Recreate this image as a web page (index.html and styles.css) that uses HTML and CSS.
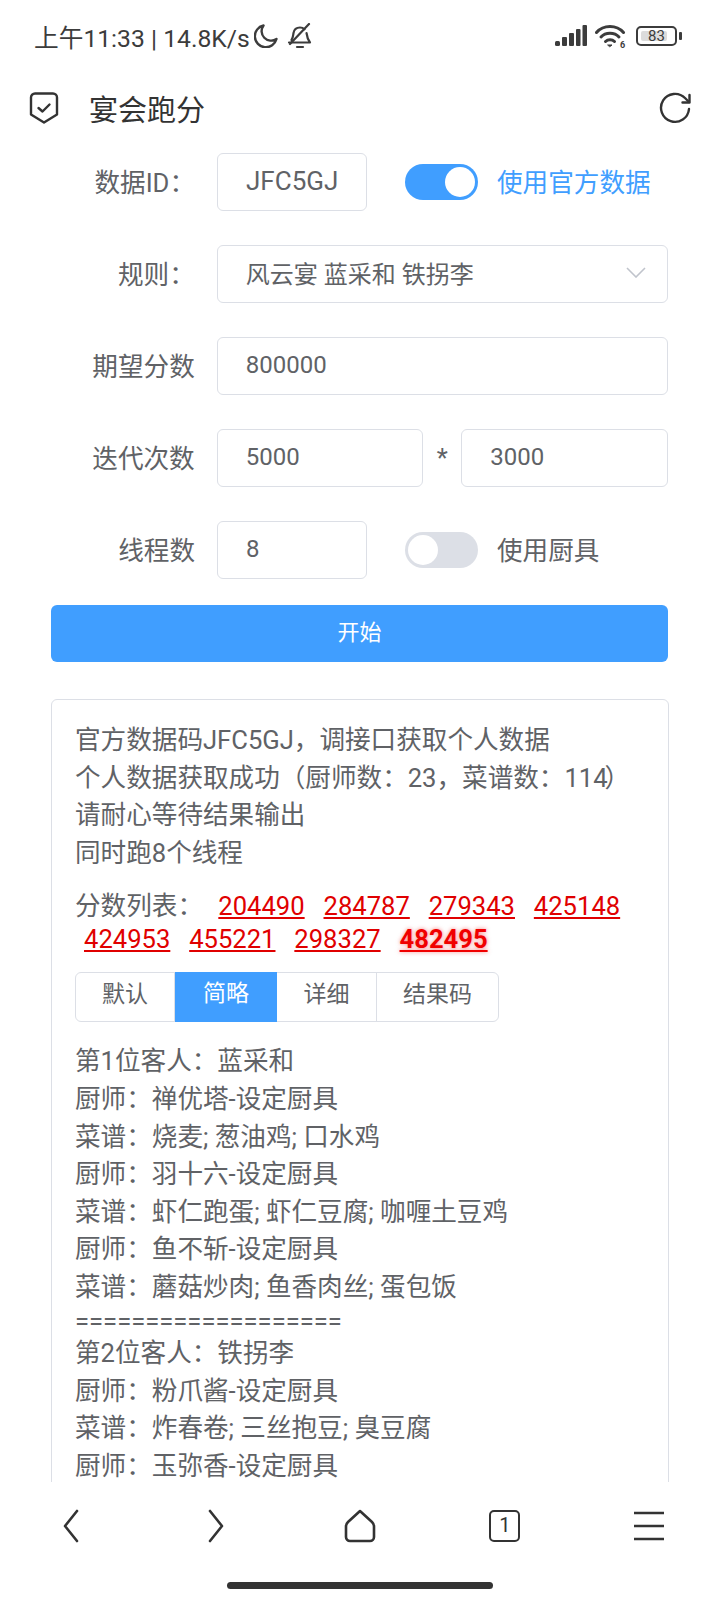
FILE: index.html
```html
<!DOCTYPE html>
<html lang="zh-CN">
<head>
  <meta charset="UTF-8">
  <title>宴会跑分</title>
  <link rel="stylesheet" href="styles.css">
</head>
<body>
  <div class="status-bar">
    <div class="status-left">
      <span class="status-text">上午11:33 | 14.8K/s</span>
      <svg class="moon" width="24" height="24" viewBox="0 0 24 24"><path d="M9.500 1.500a11 11 0 1 0 13 13.500 9.500 9.500 0 0 1-13-13.500z" fill="none" stroke="#3c3c3c" stroke-width="2.400" stroke-linejoin="round"/></svg>
      <svg class="bell" width="26" height="26" viewBox="0 0 26 26" fill="none" stroke="#3c3c3c" stroke-width="2.200" stroke-linecap="round" stroke-linejoin="round"><path d="M4.500 17c1.500-2 1.500-4 2-7 .6-3.500 3.200-5.500 6.500-5.500 1.800 0 3.300.6 4.500 1.800M19.500 10c.4 3 .8 6 3.500 9.500H2"/><path d="M22 1 3 21"/><path d="M10 24h6"/></svg>
    </div>
    <div class="status-right">
      <svg width="32" height="22" viewBox="0 0 32 22" fill="#3c3c3c"><rect x="0" y="16" width="5" height="5" rx="1.500"/><rect x="7" y="12" width="5" height="9" rx="1"/><rect x="14" y="8" width="5" height="13" rx="1"/><rect x="21" y="4" width="4.500" height="17" rx="1"/><rect x="27.500" y="0" width="4.500" height="21" rx="1"/></svg>
      <svg width="32" height="24" viewBox="0 0 32 24" fill="none" stroke="#3c3c3c" stroke-width="3" stroke-linecap="round"><path d="M1.500 8.500c7-8 20-8 27 0"/><path d="M6 13c4.500-5 13.500-5 18 0"/><path d="M10.500 17.500c2.500-2.500 6.500-2.500 9 0"/><path d="M13 21h4l-2 1.500z" fill="#3c3c3c" stroke-width="1"/><text x="25" y="23.500" class="wifi-six">6</text></svg>
      <div class="battery"><div class="battery-fill"></div><span class="battery-num">83</span></div>
      <div class="battery-tip"></div>
    </div>
  </div>

  <div class="app-header">
    <svg width="30" height="32" viewBox="0 0 30 32" fill="none" stroke="#333" stroke-width="2.400" stroke-linejoin="round" stroke-linecap="round"><path d="M6 1.500h18a4 4 0 0 1 4 4v17l-13 8-13-8v-17a4 4 0 0 1 4-4z"/><path d="M9.500 16l4 3.500 7-7"/></svg>
    <span class="app-title">宴会跑分</span>
    <svg class="reload" width="32" height="32" viewBox="0 0 32 32" fill="none" stroke="#333" stroke-width="2.400" stroke-linecap="round" stroke-linejoin="round"><path d="M30 17a14 14 0 1 1-4-11l4 4"/><path d="M30.500 3v7.500h-7"/></svg>
  </div>

  <form class="run-form">
    <div class="form-row">
      <label class="form-label">数据ID：</label>
      <div class="input input-short data-id">JFC5GJ</div>
      <div class="switch on"><i></i></div>
      <span class="switch-text active">使用官方数据</span>
    </div>
    <div class="form-row">
      <label class="form-label">规则：</label>
      <div class="input input-full select">
        风云宴 蓝采和 铁拐李
        <svg width="20" height="11" viewBox="0 0 20 11" fill="none" stroke="#c0c4cc" stroke-width="1.600"><path d="M1 1l9 9 9-9"/></svg>
      </div>
    </div>
    <div class="form-row">
      <label class="form-label">期望分数</label>
      <div class="input input-full">800000</div>
    </div>
    <div class="form-row">
      <label class="form-label">迭代次数</label>
      <div class="input input-half">5000</div>
      <span class="times">*</span>
      <div class="input input-half">3000</div>
    </div>
    <div class="form-row">
      <label class="form-label">线程数</label>
      <div class="input input-short">8</div>
      <div class="switch"><i></i></div>
      <span class="switch-text">使用厨具</span>
    </div>
    <button type="button" class="start-btn">开始</button>
  </form>

  <div class="result-wrap">
    <div class="result-box">
      <div class="log">
        <div>官方数据码JFC5GJ，调接口获取个人数据</div>
        <div class="nowrap">个人数据获取成功（厨师数：23，菜谱数：114<span class="tight">）</span></div>
        <div>请耐心等待结果输出</div>
        <div>同时跑8个线程</div>
      </div>
      <div class="scores">分数列表： <a>204490</a> <a>284787</a> <a>279343</a> <a>425148</a> <a>424953</a> <a>455221</a> <a>298327</a> <a class="best">482495</a></div>
      <div class="tabs">
        <span class="tab tab-1">默认</span>
        <span class="tab tab-2 active">简略</span>
        <span class="tab tab-3">详细</span>
        <span class="tab tab-4">结果码</span>
      </div>
      <div class="detail">
        <div>第1位客人：蓝采和</div>
        <div>厨师：禅优塔-设定厨具</div>
        <div>菜谱：烧麦; 葱油鸡; 口水鸡</div>
        <div>厨师：羽十六-设定厨具</div>
        <div>菜谱：虾仁跑蛋; 虾仁豆腐; 咖喱土豆鸡</div>
        <div>厨师：鱼不斩-设定厨具</div>
        <div>菜谱：蘑菇炒肉; 鱼香肉丝; 蛋包饭</div>
        <div class="sep">===================</div>
        <div>第2位客人：铁拐李</div>
        <div>厨师：粉爪酱-设定厨具</div>
        <div>菜谱：炸春卷; 三丝抱豆; 臭豆腐</div>
        <div>厨师：玉弥香-设定厨具</div>
      </div>
    </div>
  </div>

  <div class="browser-nav">
    <svg width="20" height="34" viewBox="0 0 20 34" fill="none" stroke="#333" stroke-width="2.600" stroke-linecap="round" stroke-linejoin="round"><path d="M16 2 4 17l12 15"/></svg>
    <svg width="20" height="34" viewBox="0 0 20 34" fill="none" stroke="#333" stroke-width="2.600" stroke-linecap="round" stroke-linejoin="round"><path d="M4 2l12 15L4 32"/></svg>
    <svg width="32" height="34" viewBox="0 0 32 34" fill="none" stroke="#333" stroke-width="2.600" stroke-linejoin="round"><path d="M16 2l12 11c1.500 1.400 2 2.500 2 4.500V28a4 4 0 0 1-4 4H6a4 4 0 0 1-4-4V17.500c0-2 .5-3.100 2-4.500z"/></svg>
    <div class="tab-count">1</div>
    <svg width="30" height="30" viewBox="0 0 30 30" stroke="#333" stroke-width="2.600"><path d="M0 2h30M0 15h30M0 28h30"/></svg>
  </div>
  <div class="home-area"><div class="home-bar"></div></div>
</body>
</html>
```

FILE: styles.css
```css
* {
  box-sizing: border-box;
}

body {
  margin: 0;
  width: 720px;
  height: 1600px;
  overflow: hidden;
  display: flex;
  flex-direction: column;
  background: #fff;
  color: #606266;
  font-family: Roboto, "Noto Sans CJK SC", sans-serif;
  font-size: 25.600px;
}

/* status bar */
.status-bar {
  height: 72px;
  flex: none;
  display: flex;
  justify-content: space-between;
  align-items: center;
  padding: 0 38px 0 34px;
}

.status-left, .status-right {
  display: flex;
  align-items: center;
}

.status-text {
  font-size: 24.700px;
  color: #3c3c3c;
}

.moon {
  margin-left: 4px;
}

.bell {
  margin-left: 9px;
}

.status-right svg + svg {
  margin-left: 8px;
}

.wifi-six {
  font-size: 9px;
  font-weight: bold;
  fill: #3c3c3c;
  stroke: none;
}

.battery {
  position: relative;
  width: 41px;
  height: 20px;
  margin-left: 9px;
  padding: 3px;
  border: 2px solid #3c3c3c;
  border-radius: 5px;
}

.battery-fill {
  width: 83%;
  height: 100%;
  background: #dcdcdc;
  border-radius: 2px;
}

.battery-num {
  position: absolute;
  top: 0;
  left: 0;
  width: 100%;
  text-align: center;
  font-size: 15px;
  line-height: 16px;
  color: #3c3c3c;
}

.battery-tip {
  width: 3px;
  height: 8px;
  margin-left: 2px;
  background: #3c3c3c;
  border-radius: 1px;
}

/* header */
.app-header {
  height: 72px;
  flex: none;
  display: flex;
  align-items: center;
  padding: 0 29px;
}

.app-title {
  margin-left: 30px;
  font-size: 29px;
  color: #333;
}

.reload {
  margin-left: auto;
}

/* form */
.run-form {
  flex: none;
  padding: 9px 52px 0 51px;
  display: flex;
  flex-direction: column;
}

.form-row {
  display: flex;
  align-items: center;
  height: 58px;
  margin-bottom: 34px;
}

.form-label {
  width: 144px;
  margin-right: 22px;
  padding-bottom: 4px;
  text-align: right;
}

.input {
  height: 58px;
  display: flex;
  align-items: center;
  padding: 0 28px 3px;
  border: 1.500px solid #dcdfe6;
  border-radius: 6px;
  font-size: 24px;
}

.input-short {
  width: 150px;
}

.data-id {
  padding-right: 0;
  font-size: 26px;
}

.input-full {
  width: 452px;
}

.input-half {
  width: 207px;
}

.select {
  justify-content: space-between;
  padding-right: 21px;
}

.times {
  width: 38px;
  text-align: center;
}

.switch {
  width: 73px;
  height: 36px;
  margin-left: 38px;
  padding: 3px;
  border-radius: 18px;
  background: #dcdfe6;
  display: flex;
}

.switch i {
  width: 30px;
  height: 30px;
  border-radius: 50%;
  background: #fff;
}

.switch.on {
  background: #409eff;
  justify-content: flex-end;
}

.switch-text {
  margin-left: 19px;
  padding-bottom: 3px;
}

.switch-text.active {
  color: #409eff;
}

.start-btn {
  height: 57px;
  margin-top: -8px;
  padding: 0 0 8px;
  border: none;
  border-radius: 6px;
  background: #409eff;
  color: #fff;
  font-family: inherit;
  font-size: 22px;
}

/* result */
.result-wrap {
  flex: 1;
  min-height: 0;
  overflow: hidden;
  padding: 37px 51px 0;
}

.result-box {
  width: 618px;
  padding: 22px 22px 22px 23px;
  border: 1.500px solid #dcdfe6;
  border-radius: 6px;
}

.log {
  line-height: 37.500px;
}

.nowrap {
  white-space: nowrap;
}

.tight {
  margin-left: -3px;
}

.scores {
  margin-top: 18px;
  line-height: 32.700px;
}

.scores a {
  margin: 0 3.500px 0 9px;
  color: #e00000;
  text-decoration: underline;
}

.scores .best {
  color: #f00000;
  font-weight: bold;
  text-shadow: 0 0 4px rgba(240, 0, 0, 0.5);
}

.tabs {
  display: flex;
  width: 424px;
  height: 50px;
  margin: 17px 0 21px;
  border: 1.500px solid #dcdfe6;
  border-radius: 6px;
  line-height: 44px;
  font-size: 23px;
  text-align: center;
}

.tab {
  border-right: 1.500px solid #dcdfe6;
}

.tab-1 { width: 99px; }
.tab-2 { width: 102px; }
.tab-3 { width: 100px; }
.tab-4 { flex: 1; border-right: none; }

.tab.active {
  margin-top: -1.500px;
  height: 50px;
  background: #409eff;
  color: #fff;
  border-right: none;
}

.detail {
  line-height: 37.600px;
}

.sep {
  line-height: 28.700px;
}

/* browser bottom */
.browser-nav {
  height: 82px;
  flex: none;
  display: grid;
  grid-template-columns: repeat(5, 144.500px);
  justify-items: center;
  align-items: center;
  margin-left: -1px;
  padding-top: 5px;
  background: #fff;
}

.tab-count {
  width: 31px;
  height: 32px;
  border: 2.600px solid #333;
  border-radius: 5px;
  text-align: center;
  font-size: 20px;
  line-height: 27px;
  color: #333;
}

.home-area {
  height: 36px;
  flex: none;
  display: flex;
  justify-content: center;
  padding-top: 18px;
}

.home-bar {
  width: 266px;
  height: 7px;
  border-radius: 4px;
  background: #333;
}
```
